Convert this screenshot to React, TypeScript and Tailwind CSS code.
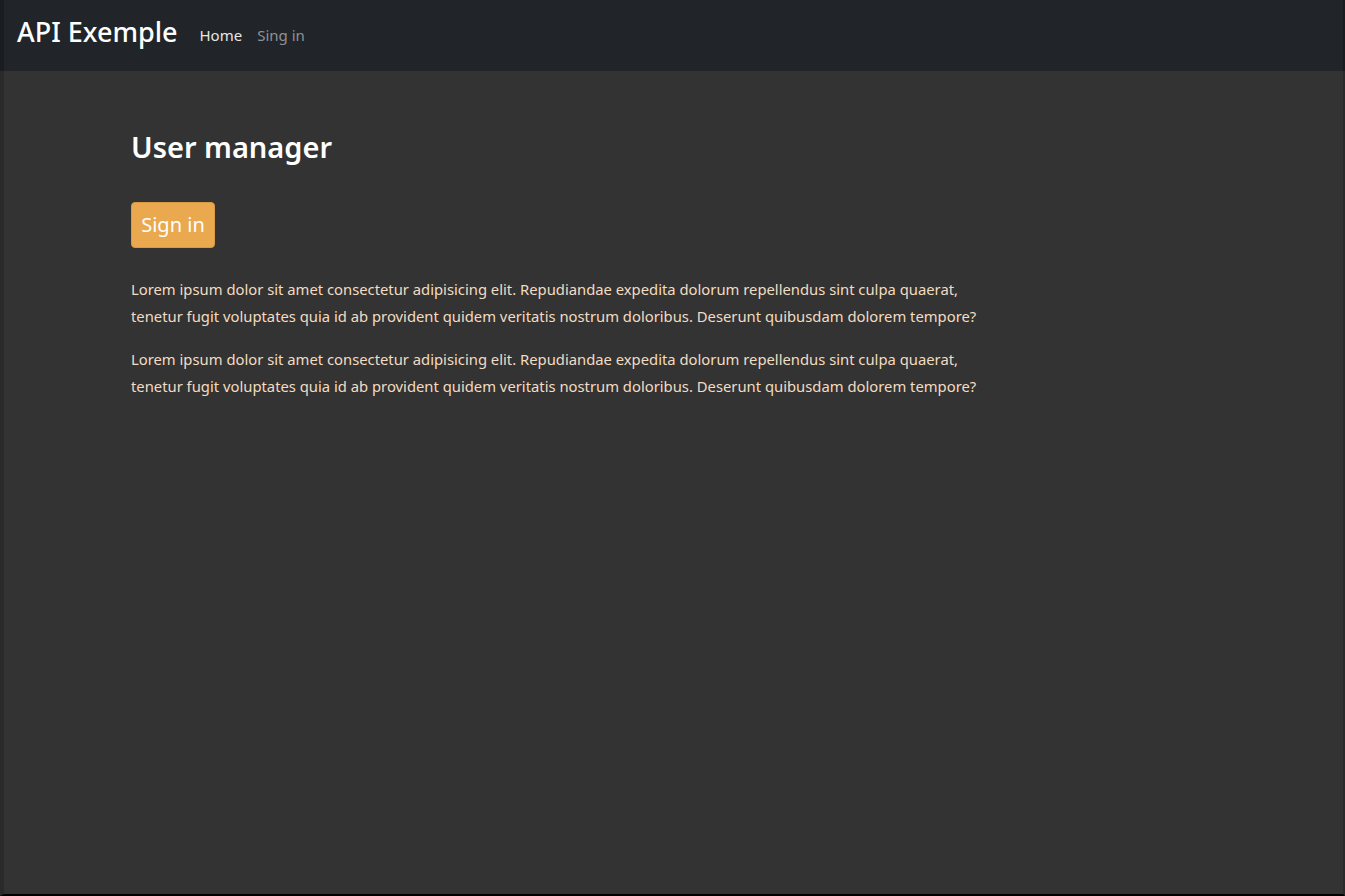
export default function App() {
  const font = { fontFamily: '"Noto Sans", "Open Sans", sans-serif' };
  return (
    <div className="flex h-[896px] w-full flex-col bg-black" style={font}>
      <nav className="flex h-[71px] shrink-0 items-start border-l-4 border-r-2 border-[#1b1c1f] bg-[#212529] pl-[13px] pt-[16px]">
        <span className="text-[27px] leading-[32px] font-medium text-white">API Exemple</span>
        <div className="ml-[22px] flex items-center gap-[15px] pt-[9px] text-[15px] leading-[20px]">
          <span className="text-[#e6e6e6]">Home</span>
          <span className="text-[#8f9295]">Sing in</span>
        </div>
      </nav>
      <main className="flex-1 border-l-4 border-r-2 border-b-2 border-l-[#2a2a2a] border-r-[#2a2a2a] border-b-black bg-[#333333] pl-[127px]">
        <h1 className="mt-[56px] text-[29px] leading-[40px] font-semibold text-white">User manager</h1>
        <button className="mt-[35px] h-[46px] w-[84px] rounded-[4px] border border-[#d99a43] bg-[#eaa94f] text-[20px] text-white">
          Sign in
        </button>
        <div className="mt-[28px] w-[880px] text-[14.8px] leading-[27px] text-[#f2dcc2]">
          <p className="mb-[16px]">
            <span className="block">Lorem ipsum dolor sit amet consectetur adipisicing elit. Repudiandae expedita dolorum repellendus sint culpa quaerat,</span>
            <span className="block">tenetur fugit voluptates quia id ab provident quidem veritatis nostrum doloribus. Deserunt quibusdam dolorem tempore?</span>
          </p>
          <p>
            <span className="block">Lorem ipsum dolor sit amet consectetur adipisicing elit. Repudiandae expedita dolorum repellendus sint culpa quaerat,</span>
            <span className="block">tenetur fugit voluptates quia id ab provident quidem veritatis nostrum doloribus. Deserunt quibusdam dolorem tempore?</span>
          </p>
        </div>
      </main>
    </div>
  );
}
